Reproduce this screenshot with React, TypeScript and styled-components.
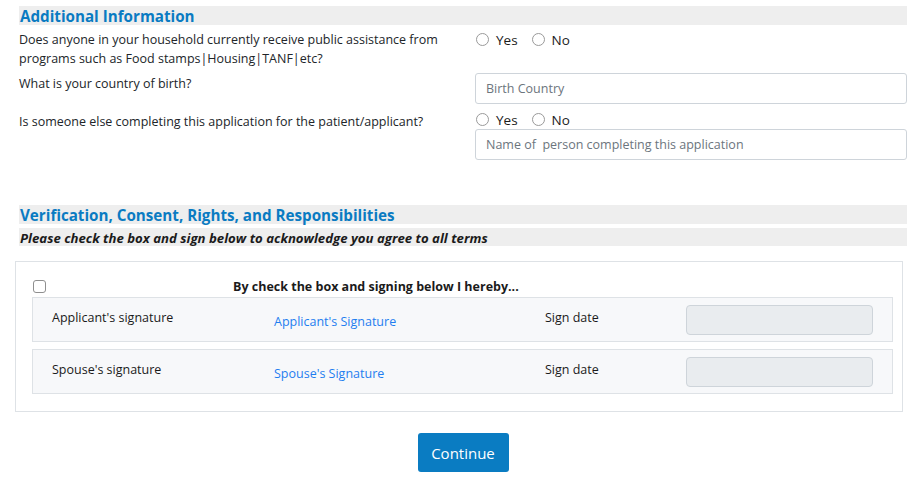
import React from "react";
import styled, { createGlobalStyle } from "styled-components";

const Global = createGlobalStyle`
  html, body { margin: 0; padding: 0; background: #fff; }
  body { font-family: "Open Sans", "Noto Sans", sans-serif; font-size: 12.5px; color: #212529; }
  * { box-sizing: border-box; }
`;

const Page = styled.div`
  width: 920px;
  padding: 6px 13px 0 19px;
`;

const SectionTitle = styled.h2`
  margin: 0;
  background: #eeeeee;
  color: #0a7bc2;
  font-size: 15.2px;
  font-weight: 700;
  line-height: 19px;
  padding: 1px 1px 0;
  height: 19px;
`;

const SubTitle = styled.div`
  margin-top: 4px;
  background: #eeeeee;
  color: #1b1b1b;
  font-size: 13.2px;
  font-weight: 700;
  font-style: italic;
  line-height: 18px;
  padding: 1px 1px 0;
  height: 18px;
`;

const Grid = styled.div`
  display: grid;
  grid-template-columns: 456px 432px;
  row-gap: 5px;
  margin-top: 5px;
`;

const Question = styled.div<{ $top?: number }>`
  line-height: 19px;
  padding-top: ${(p) => p.$top ?? 0}px;
`;

const Answer = styled.div<{ $top?: number }>`
  display: flex;
  flex-direction: column;
  padding-top: ${(p) => p.$top ?? 0}px;
`;

const RadioRow = styled.div`
  display: flex;
  align-items: center;
  height: 19px;
`;

const RadioLabel = styled.label`
  display: flex;
  align-items: center;
  margin-right: 13px;
  font-size: 13.5px;
  color: #1b1b1b;
`;

const Radio = styled.span`
  display: inline-block;
  width: 13px;
  height: 13px;
  border-radius: 50%;
  border: 1px solid #9a9a9a;
  background: #fff;
  margin: 0 7px 0 1px;
`;

const TextInput = styled.input`
  width: 100%;
  height: 31px;
  border: 1px solid #ced4da;
  border-radius: 3px;
  padding: 0 10px;
  font-family: inherit;
  font-size: 12.5px;
  color: #495057;
  &::placeholder { color: #6c757d; }
`;

const Spacer = styled.div`
  height: 45px;
`;

const ConsentBox = styled.div`
  margin: 15px 4px 0 -4px;
  border: 1px solid #dee2e6;
  padding: 13px 9px 17px 16px;
`;

const CheckRow = styled.div`
  display: flex;
  align-items: center;
  height: 22px;
`;

const CheckBox = styled.span`
  display: inline-block;
  width: 13px;
  height: 13px;
  border: 1px solid #8f8f8f;
  border-radius: 3px;
  margin-left: 1px;
`;

const CheckText = styled.span`
  margin-left: 187px;
  font-weight: 700;
  color: #1b1b1b;
`;

const SignPanel = styled.div`
  display: grid;
  grid-template-columns: 222px 271px 141px 1fr;
  background: #f7f8fa;
  border: 1px solid #dee2e6;
  padding: 7px 19px 6px 19px;
  margin-top: 7px;
  &:first-of-type { margin-top: 0; }
`;

const PanelLabel = styled.span`
  padding-top: 3px;
  line-height: 19px;
  color: #1b1b1b;
`;

const SignLink = styled.a`
  padding-top: 7px;
  line-height: 19px;
  color: #1f7ef0;
  text-decoration: none;
  cursor: pointer;
`;

const DateField = styled.div`
  height: 30px;
  background: #e9ecef;
  border: 1px solid #ced4da;
  border-radius: 4px;
`;

const Actions = styled.div`
  display: flex;
  justify-content: center;
  margin-top: 21px;
`;

const Button = styled.button`
  width: 91px;
  height: 39px;
  background: #0a7cc2;
  color: #fff;
  border: none;
  border-radius: 3px;
  font-family: inherit;
  font-size: 15px;
`;

const panels = [
  { label: "Applicant's signature", link: "Applicant's Signature" },
  { label: "Spouse's signature", link: "Spouse's Signature" },
];

function YesNo() {
  return (
    <RadioRow>
      <RadioLabel><Radio />Yes</RadioLabel>
      <RadioLabel><Radio />No</RadioLabel>
    </RadioRow>
  );
}

export default function App() {
  return (
    <Page>
      <Global />
      <SectionTitle>Additional Information</SectionTitle>
      <Grid>
        <Question>
          Does anyone in your household currently receive public assistance from programs such as Food stamps|Housing|TANF|etc?
        </Question>
        <Answer><YesNo /></Answer>
        <Question $top={1}>What is your country of birth?</Question>
        <Answer><TextInput placeholder="Birth Country" /></Answer>
        <Question $top={3}>Is someone else completing this application for the patient/applicant?</Question>
        <Answer $top={1}>
          <YesNo />
          <TextInput placeholder="Name of  person completing this application" />
        </Answer>
      </Grid>
      <Spacer />
      <SectionTitle>Verification, Consent, Rights, and Responsibilities</SectionTitle>
      <SubTitle>Please check the box and sign below to acknowledge you agree to all terms</SubTitle>
      <ConsentBox>
        <CheckRow>
          <CheckBox />
          <CheckText>By check the box and signing below I hereby...</CheckText>
        </CheckRow>
        <div>
          {panels.map((p) => (
            <SignPanel key={p.label}>
              <PanelLabel>{p.label}</PanelLabel>
              <SignLink>{p.link}</SignLink>
              <PanelLabel>Sign date</PanelLabel>
              <DateField />
            </SignPanel>
          ))}
        </div>
      </ConsentBox>
      <Actions>
        <Button>Continue</Button>
      </Actions>
    </Page>
  );
}
